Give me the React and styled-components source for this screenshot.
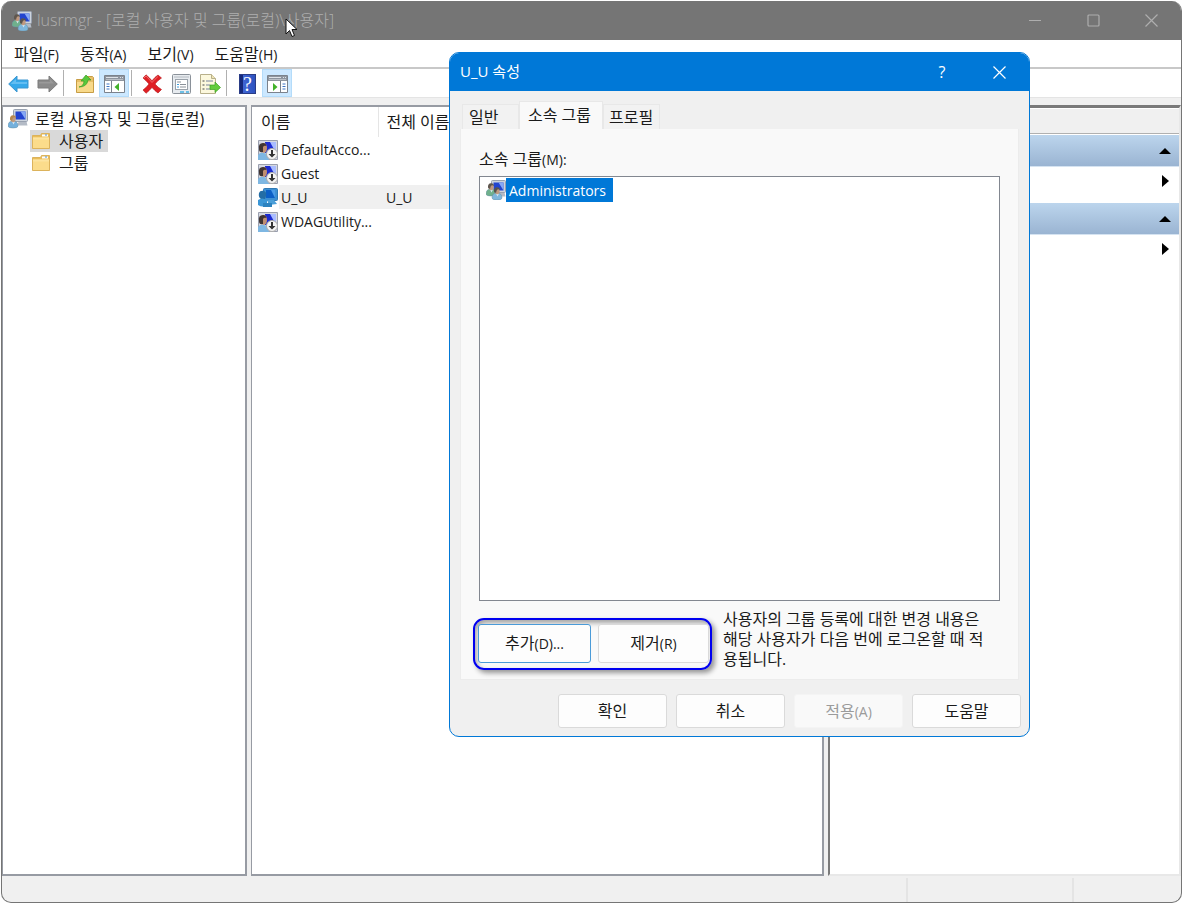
import React from "react";
import styled, { createGlobalStyle, css } from "styled-components";

const GlobalStyle = createGlobalStyle`
  * { box-sizing: border-box; }
  body { margin: 0; background: #fff; }
  button { font: inherit; color: inherit; }
  body, button {
    font-family: "Open Sans", "Noto Sans CJK KR", sans-serif;
    font-size: 16px;
    line-height: 20px;
    color: #1a1a1a;
  }
`;

const Latin = styled.span`
  font-size: 14px;
`;

const Desktop = styled.div`
  position: relative;
  min-height: 100vh;
  display: flex;
  flex-direction: column;
  padding: 1px 0 0 1px;
`;

const ConsoleWindow = styled.main`
  flex: 1;
  display: flex;
  flex-direction: column;
  border: 1px solid #757575;
  border-top: 0;
  border-radius: 10px;
  overflow: hidden;
  background: #f0f0f0;
`;

const TitleBar = styled.header`
  display: flex;
  align-items: center;
  height: 39px;
  padding-left: 10px;
  background: #757575;
  color: #aeaeae;
`;

const WindowTitle = styled.h1`
  flex: 1;
  margin: 0 0 2px 5px;
  font-size: 16px;
  font-weight: 300;
  line-height: 20px;
`;

const CaptionButton = styled.button`
  display: grid;
  place-items: center;
  width: ${(p) => p.$width || 58}px;
  height: 39px;
  padding: 0 2px 0 0;
  border: 0;
  background: transparent;
  color: inherit;
`;

const MenuBar = styled.nav`
  display: flex;
  gap: 21px;
  height: 29px;
  padding: 2px 12px 0;
  background: #fff;
  border-bottom: 2px solid #c8c8c8;
`;

const MenuItem = styled.button`
  padding: 0;
  border: 0;
  background: none;
`;

const ToolBar = styled.div`
  display: flex;
  align-items: center;
  height: 29px;
  padding-left: 2px;
  background: #fff;
  border-bottom: 1px solid #e4e4e4;
`;

const ToolButton = styled.button`
  display: grid;
  place-items: center;
  width: ${(p) => (p.$on ? 30 : 29)}px;
  height: 28px;
  padding: 2px 0 0;
  border: 1px solid ${(p) => (p.$on ? "#b4dcfa" : "transparent")};
  background: ${(p) => (p.$on ? "#cce8ff" : "transparent")};
`;

const ToolDivider = styled.span`
  width: 1px;
  height: 26px;
  margin: 0 6px 0 ${(p) => (p.$tight ? 1 : 2)}px;
  background: #b0b0b0;
`;

const Panes = styled.div`
  flex: 1;
  display: flex;
  gap: 4px;
  padding-top: 7px;
`;

const paneFrame = css`
  border: 2px solid #979ba3;
  border-width: 2px 2px 2px 1px;
  background: #fff;
`;

const TreePane = styled.section`
  ${paneFrame}
  flex: 0 0 245px;
  padding-left: 4px;
`;

const TreeList = styled.ul`
  margin: 0;
  padding: 0 0 0 ${(p) => (p.$nested ? 23 : 0)}px;
  list-style: none;
`;

const TreeItem = styled.li`
  display: flex;
  flex-direction: column;
  align-items: flex-start;
`;

const TreeRow = styled.button`
  display: flex;
  align-items: center;
  gap: 9px;
  height: 22px;
  padding: 0 5px 0 2px;
  border: 0;
  background: ${(p) => (p.$selected ? "#d9d9d9" : "transparent")};
  white-space: nowrap;
`;

const TreeRoot = styled(TreeRow)`
  gap: 7px;
  height: 23px;
  padding-left: 1px;
`;

const ListPane = styled.section`
  ${paneFrame}
  flex: 1;
  padding-left: 6px;
`;

const UserTable = styled.table`
  width: 100%;
  table-layout: fixed;
  border-collapse: collapse;
  font-size: 14px;
`;

const HeadCell = styled.th`
  width: ${(p) => p.$width || "auto"};
  height: 30px;
  padding: 0 0 0 ${(p) => p.$indent}px;
  border-right: 1px solid #e5e5e5;
  text-align: left;
  font-size: 16px;
  font-weight: 400;
`;

const Cell = styled.td`
  height: 24px;
  padding: 1px 0 0 ${(p) => p.$indent || 0}px;
  background: ${(p) =>
    p.$selected
      ? p.$first
        ? "linear-gradient(to right, #fff 21px, #f0f0f0 21px)"
        : "#f0f0f0"
      : "transparent"};
  white-space: nowrap;
`;

const UserName = styled.span`
  display: flex;
  align-items: center;
  gap: 3px;
`;

const ActionPane = styled.section`
  flex: 0 0 353px;
  display: flex;
  flex-direction: column;
  border: solid;
  border-width: 3px 2px 2px 2px;
  border-color: #7a7a7a #e8e8e8 #e8e8e8 #7a7a7a;
  background: #fff;
`;

const ActionHead = styled.div`
  height: 25px;
  margin-top: 1px;
  margin-bottom: 1px;
  border-bottom: 1px solid #b0b0b0;
  background: #f0f0f0;
`;

const ActionGroup = styled.button`
  display: flex;
  align-items: center;
  justify-content: flex-end;
  width: 100%;
  height: 32px;
  padding: 0 8px;
  border: 0;
  border-bottom: 1px solid #d5e3f1;
  background: linear-gradient(#bcd5ed, #9ab4d2);
`;

const ActionItem = styled.button`
  display: flex;
  align-items: center;
  justify-content: flex-end;
  width: 100%;
  height: 36px;
  padding: 0 10px 8px;
  border: 0;
  background: #fff;
`;

const StatusBar = styled.footer`
  display: flex;
  justify-content: flex-end;
  height: 26px;
  padding-top: 2px;
`;

const StatusCell = styled.div`
  width: ${(p) => p.$width}px;
  border-left: 2px solid #e4e4e4;
`;

const Dialog = styled.section`
  position: absolute;
  top: 52px;
  left: 449px;
  width: 581px;
  border: 1px solid #0078d7;
  border-radius: 10px;
  overflow: hidden;
  background: #f0f0f0;
`;

const DialogTitleBar = styled.header`
  display: flex;
  align-items: center;
  height: 38px;
  padding-left: 10px;
  background: #0078d7;
  color: #fff;
`;

const DialogTitle = styled.h2`
  flex: 1;
  margin: 0 0 2px;
  font-size: 15px;
  font-weight: 400;
  line-height: 20px;
`;

const TabStrip = styled.div`
  display: flex;
  align-items: flex-end;
  height: 38px;
  padding-left: 12px;
`;

const Tab = styled.button`
  width: ${(p) => p.$width}px;
  height: ${(p) => (p.$active ? 28 : 25)}px;
  padding: 0 0 ${(p) => (p.$active ? 2 : 0)}px ${(p) => p.$indent}px;
  border: 1px solid #e8e8e8;
  border-bottom: 0;
  background: ${(p) => (p.$active ? "#f9f9f9" : "#f2f2f2")};
  text-align: left;
  white-space: nowrap;
`;

const TabPanel = styled.div`
  margin: 0 10px;
  padding: 20px 18px 8px;
  border: 1px solid #ececec;
  border-top: 0;
  background: #f9f9f9;
`;

const GroupLabel = styled.div`
  height: 20px;
`;

const GroupList = styled.ul`
  height: 425px;
  margin: 7px 0 0;
  padding: 1px 6px;
  border: 1px solid #828790;
  background: #fff;
  list-style: none;
`;

const GroupOption = styled.li`
  display: flex;
  align-items: center;
`;

const GroupName = styled.span`
  height: 24px;
  padding: 1px 7px 0 3px;
  background: #0078d7;
  color: #fff;
  font-size: 14px;
  line-height: 23px;
`;

const MembershipRow = styled.div`
  display: flex;
  align-items: center;
  gap: 11px;
  margin: 8px 0 0 -6px;
`;

const MarkedButtons = styled.div`
  flex: 0 0 239px;
  display: flex;
  gap: 7px;
  height: 52px;
  margin-top: 8px;
  padding: 4px 1px 5px 3px;
  border: 2px solid #0000f0;
  border-radius: 11px;
  box-shadow: 3px 3px 5px rgba(0, 0, 0, 0.4), inset 2px 3px 5px rgba(0, 0, 0, 0.35);
`;

const MembershipNote = styled.p`
  margin: 0 0 2px;
`;

const PushButton = styled.button`
  flex: 0 0 ${(p) => p.$width || 109}px;
  height: ${(p) => p.$height || 34}px;
  padding: 0;
  border: 1px solid ${(p) => (p.$focus ? "#4a9bd8" : "#dadada")};
  border-radius: 3px;
  background: #fdfdfd;
  &:disabled {
    border-color: #f4f4f4;
    background: #f9f9f9;
    color: #9b9b9b;
  }
`;

const DialogFooter = styled.footer`
  display: flex;
  justify-content: flex-end;
  gap: 9px;
  padding: 14px 8px 8px;
`;

const Pointer = styled.svg`
  position: absolute;
  top: 18px;
  left: 285px;
`;

function MonitorShape({ x = 7, y = 1, w = 12, h = 10 }) {
  return (
    <g>
      <path d={`M${x + 5} ${y + h}h${w - 6}l1 4h-${w - 4}z`} fill="#b4bbc6" />
      <rect x={x} y={y} width={w} height={h} rx="1" fill="#cdd4dd" stroke="#98a1b0" />
      <rect x={x + 2} y={y + 2} width={w - 4} height={h - 4} fill="#2344cf" />
      <path d={`M${x + w / 2} ${y + 2}h${w / 2 - 2}v${h - 4}z`} fill="#86a8f5" />
    </g>
  );
}

function PersonShape({ x, y, hair, coat }) {
  return (
    <g transform={`translate(${x} ${y})`}>
      <path d="M0 11q0-5 5-5t5 5q0 2-5 2t-5-2z" fill={coat} stroke="#6a93a6" strokeWidth=".5" />
      <path d="M4 6.500h3l-1.500 3z" fill="#d8e8f3" />
      <ellipse cx="5.200" cy="4" rx="2.400" ry="3.200" fill="#c09a80" />
      <path d="M2 4.500Q1.600.4 5 .2q3.200 0 2.800 3Q6.600 1.800 5.400 2.600q-1.200 1.200-1.200 3Q2.400 6 2 4.500z" fill={hair} />
    </g>
  );
}

function UsersIcon() {
  return (
    <svg width="20" height="20" viewBox="0 0 20 20" aria-hidden="true">
      <MonitorShape x={5.5} y={0.5} w={14} h={12} />
      <PersonShape x={0} y={3} hair="#5f564e" coat="#6fb08c" />
      <PersonShape x={6} y={7} hair="#57534f" coat="#7fb7dc" />
    </svg>
  );
}

function ComputerUserIcon() {
  return (
    <svg width="20" height="20" viewBox="0 0 20 20" aria-hidden="true">
      <MonitorShape x={5.5} y={0.5} w={14} h={12} />
      <PersonShape x={0} y={6} hair="#b88a4e" coat="#74b0dc" />
    </svg>
  );
}

function DisabledUserIcon() {
  return (
    <svg width="20" height="20" viewBox="0 0 20 20" aria-hidden="true">
      <path d="M.5.5h19v19H.5z" fill="#d6d9e2" stroke="#9a9fae" />
      <rect x="7" y="2" width="11" height="11" fill="#1c2bd0" />
      <path d="M12 2h6v11z" fill="#a9bcff" />
      <path d="M0 20v-5q2-3 6-2 5 1 5 7z" fill="#7eb7e2" />
      <ellipse cx="6" cy="8" rx="3" ry="5" fill="#c08f70" />
      <path d="M1 9Q0 3 5 3q3 0 3.500 3Q6 5 5 7v5q-4 1-4-3z" fill="#403432" />
      <circle cx="14" cy="14" r="5.500" fill="#f4f4f4" stroke="#aaa" />
      <path d="M13 10h2v4h2.500L14 17.500 10.500 14H13z" fill="#333" />
    </svg>
  );
}

function SelectedUserIcon() {
  return (
    <svg width="20" height="20" viewBox="0 0 20 20" aria-hidden="true">
      <rect x="5.500" y=".5" width="14" height="12" rx="1" fill="#3c8fd2" stroke="#2f79b5" />
      <rect x="8" y="2" width="9" height="8" fill="#0b5fc6" />
      <path d="M13 2h4v8z" fill="#4a9be8" />
      <path d="M1 5q1-3 5-2 3 1 2 5l-1 3H3Q0 9 1 5z" fill="#236da5" />
      <path d="M0 12q4-3 9 0v5q-4 3-9 0z" fill="#3a96d6" />
      <path d="M9 12h7l3 4-8 1z" fill="#4b9fd9" />
      <path d="M5 15h9v4H5z" fill="#2c82bf" />
    </svg>
  );
}

function FolderIcon() {
  return (
    <svg width="18" height="17" viewBox="0 0 18 17" aria-hidden="true">
      <path d="M.5 2.500h8l1-2h8v15H.5z" fill="#e9bd5a" stroke="#dcb35c" />
      <path d="M10 1.500h6v2h-6z" fill="#fff" />
      <path d="M13 1.500h2v1h-2z" fill="#4b91dc" />
      <path d="M1 4.500h16V15H1z" fill="#fbdc8b" />
      <path d="M1 4.500h16v2H1z" fill="#fde4a0" />
    </svg>
  );
}

function ArrowIcon({ back }) {
  return (
    <svg width="21" height="18" viewBox="0 0 21 18" aria-hidden="true">
      <path
        d={back ? "M.7 9 9 1v4h11v8H9v4z" : "M20.300 9 12 1v4H1v8h11v4z"}
        fill={back ? "#35a8ea" : "#8b8b8b"}
        stroke={back ? "#3d97d0" : "#7d7d7d"}
      />
      <path
        d={back ? "M3 8.500 8 4v3h11v2H3z" : "M2 7h11V4l4 4.500H2z"}
        fill={back ? "#62bdf2" : "#9a9a9a"}
      />
    </svg>
  );
}

function UpFolderIcon() {
  return (
    <svg width="20" height="20" viewBox="0 0 20 20" aria-hidden="true">
      <path d="M1.500 5.500h8l2-3h6l1 1v15h-17z" fill="#e8c069" stroke="#c79d45" />
      <path d="M2 8h16v10H2z" fill="#f8d98a" />
      <path d="M4 13q5-1 5-6H6l5-6 5 5h-3q-1 7-9 7z" fill="#58c83b" stroke="#3a9d26" strokeWidth=".7" />
    </svg>
  );
}

function PaneIcon({ flip }) {
  return (
    <svg width="21" height="18" viewBox="0 0 21 18" aria-hidden="true">
      <path d="M.5.5h20v17H.5z" fill="#fff" stroke="#7b828c" />
      <path d="M1 1h19v5H1z" fill="#8e959f" />
      <path d="M2 2.500h12M16 2.500h1M18 2.500h1" stroke="#dfe3e8" />
      <path d="M2 4.500h17" stroke="#b9bec5" />
      <g transform={flip ? "translate(21 0) scale(-1 1)" : undefined}>
        <path d="M7.500 6v11" stroke="#7b828c" />
        <path d="M2.500 9h3M2.500 11.500h3M2.500 14h3" stroke="#3c74c4" />
        <path d="M15 8v8l-4.500-4z" fill="#42b22a" />
      </g>
    </svg>
  );
}

function DeleteIcon() {
  return (
    <svg width="21" height="20" viewBox="0 0 21 20" aria-hidden="true">
      <path
        d="M1 4 4 .8q3 2.500 6 6 3-4 6-5.800l3.500 3q-4 2.500-6.500 6 3 3.500 6.500 5.500L16 19q-3-2-6-5.500Q7 17 4 19.300L1 16q3.500-2.500 6-6Q4 6.500 1 4z"
        fill="#df1f24"
        stroke="#b51519"
        strokeWidth=".6"
      />
      <path d="M2 4 4 2q3 3 6 6.500Q13 5 16 2.500" fill="none" stroke="#f2686a" />
    </svg>
  );
}

function PropertiesIcon() {
  return (
    <svg width="19" height="20" viewBox="0 0 19 20" aria-hidden="true">
      <rect x=".5" y=".5" width="18" height="19" rx="1" fill="#e7ebef" stroke="#8a9199" />
      <path d="M2 3h15" stroke="#b4bac1" />
      <rect x="3.500" y="5.500" width="12" height="10" fill="#fff" stroke="#9aa2aa" />
      <path d="M5 8h4" stroke="#8a9199" />
      <path d="M5 10.500h2M5 13h2" stroke="#3c9bda" />
      <path d="M8 10.500h6M8 13h6" stroke="#8a9199" />
      <path d="M8 18h4M14 18h3" stroke="#45b1e4" strokeWidth="1.500" />
    </svg>
  );
}

function ExportIcon() {
  return (
    <svg width="21" height="20" viewBox="0 0 21 20" aria-hidden="true">
      <path d="M.5.5h11l4 4v15H.5z" fill="#fcf8dd" stroke="#b8b08b" />
      <path d="M11.500.5v4h4" fill="#eee4b4" stroke="#b8b08b" />
      <path d="M2.500 7h2M2.500 11h2M2.500 15h2" stroke="#444" />
      <path d="M6 7h7M6 11h4M6 15h4" stroke="#79849e" />
      <path d="M10 11h5V8l5.500 5.500L15 18.500v-3h-5z" fill="#63cc3c" stroke="#3da023" strokeWidth=".7" />
    </svg>
  );
}

const HelpTile = styled.span`
  display: grid;
  place-items: center;
  width: 17px;
  height: 20px;
  border: 1px solid #2a3c86;
  background: linear-gradient(to right, #16297b 3px, #3f66d4 3px, #2e52bf);
  color: #fff;
  font-family: "Liberation Serif", serif;
  font-size: 20px;
  line-height: 18px;
`;

function Triangle({ up }) {
  return up ? (
    <svg width="12" height="6" viewBox="0 0 12 6" aria-hidden="true">
      <path d="M0 6 6 0l6 6z" fill="#000" />
    </svg>
  ) : (
    <svg width="7" height="12" viewBox="0 0 7 12" aria-hidden="true">
      <path d="M0 0v12l7-6z" fill="#000" />
    </svg>
  );
}

function CaptionGlyph({ kind, color }) {
  const paths = {
    minimize: <path d="M0 6.500h12" />,
    maximize: <rect x="1" y="1" width="11" height="11" rx="1" />,
    close: <path d="M.5.5l12 12M12.500.5l-12 12" />,
  };
  return (
    <svg width="13" height="13" viewBox="0 0 13 13" fill="none" stroke={color} strokeWidth="1.200" aria-hidden="true">
      {paths[kind]}
    </svg>
  );
}

const menus = [
  ["파일", "(F)"],
  ["동작", "(A)"],
  ["보기", "(V)"],
  ["도움말", "(H)"],
];

const users = [
  { name: "DefaultAcco...", full: "" },
  { name: "Guest", full: "" },
  { name: "U_U", full: "U_U", selected: true },
  { name: "WDAGUtility...", full: "" },
];

export default function App() {
  return (
    <Desktop>
      <GlobalStyle />
      <ConsoleWindow>
        <TitleBar>
          <UsersIcon />
          <WindowTitle>lusrmgr - [로컬 사용자 및 그룹(로컬)\사용자]</WindowTitle>
          <CaptionButton aria-label="최소화"><CaptionGlyph kind="minimize" color="#aeaeae" /></CaptionButton>
          <CaptionButton aria-label="최대화"><CaptionGlyph kind="maximize" color="#aeaeae" /></CaptionButton>
          <CaptionButton aria-label="닫기"><CaptionGlyph kind="close" color="#aeaeae" /></CaptionButton>
        </TitleBar>
        <MenuBar>
          {menus.map(([label, key]) => (
            <MenuItem key={label}>{label}<Latin>{key}</Latin></MenuItem>
          ))}
        </MenuBar>
        <ToolBar>
          <ToolButton aria-label="뒤로"><ArrowIcon back /></ToolButton>
          <ToolButton aria-label="앞으로"><ArrowIcon /></ToolButton>
          <ToolDivider $tight />
          <ToolButton aria-label="위로"><UpFolderIcon /></ToolButton>
          <ToolButton $on aria-label="콘솔 트리"><PaneIcon /></ToolButton>
          <ToolDivider />
          <ToolButton aria-label="삭제"><DeleteIcon /></ToolButton>
          <ToolButton aria-label="속성"><PropertiesIcon /></ToolButton>
          <ToolButton aria-label="내보내기"><ExportIcon /></ToolButton>
          <ToolDivider $tight />
          <ToolButton aria-label="도움말"><HelpTile>?</HelpTile></ToolButton>
          <ToolButton $on aria-label="작업 창"><PaneIcon flip /></ToolButton>
        </ToolBar>
        <Panes>
          <TreePane>
            <TreeList>
              <li>
                <TreeRoot><ComputerUserIcon />로컬 사용자 및 그룹(로컬)</TreeRoot>
                <TreeList $nested>
                  <TreeItem><TreeRow $selected><FolderIcon />사용자</TreeRow></TreeItem>
                  <TreeItem><TreeRow><FolderIcon />그룹</TreeRow></TreeItem>
                </TreeList>
              </li>
            </TreeList>
          </TreePane>
          <ListPane>
            <UserTable>
              <thead>
                <tr>
                  <HeadCell $width="120px" $indent={3}>이름</HeadCell>
                  <HeadCell $indent={8}>전체 이름</HeadCell>
                </tr>
              </thead>
              <tbody>
                {users.map((u) => (
                  <tr key={u.name}>
                    <Cell $first $selected={u.selected}>
                      <UserName>
                        {u.selected ? <SelectedUserIcon /> : <DisabledUserIcon />}
                        {u.name}
                      </UserName>
                    </Cell>
                    <Cell $indent={8} $selected={u.selected}>{u.full}</Cell>
                  </tr>
                ))}
              </tbody>
            </UserTable>
          </ListPane>
          <ActionPane>
            <ActionHead />
            <ActionGroup aria-label="사용자 작업"><Triangle up /></ActionGroup>
            <ActionItem aria-label="기타 작업"><Triangle /></ActionItem>
            <ActionGroup aria-label="U_U 작업"><Triangle up /></ActionGroup>
            <ActionItem aria-label="기타 작업"><Triangle /></ActionItem>
          </ActionPane>
        </Panes>
        <StatusBar>
          <StatusCell $width={166} />
          <StatusCell $width={109} />
        </StatusBar>
      </ConsoleWindow>

      <Dialog role="dialog" aria-labelledby="dialog-title">
        <DialogTitleBar>
          <DialogTitle id="dialog-title">U_U 속성</DialogTitle>
          <CaptionButton $width={56} aria-label="도움말">?</CaptionButton>
          <CaptionButton aria-label="닫기"><CaptionGlyph kind="close" color="#fff" /></CaptionButton>
        </DialogTitleBar>
        <TabStrip role="tablist">
          <Tab role="tab" $width={57} $indent={6}>일반</Tab>
          <Tab role="tab" aria-selected="true" $active $width={84} $indent={8}>소속 그룹</Tab>
          <Tab role="tab" $width={57} $indent={5}>프로필</Tab>
        </TabStrip>
        <TabPanel role="tabpanel">
          <GroupLabel id="groups-label">소속 그룹<Latin>(M):</Latin></GroupLabel>
          <GroupList role="listbox" aria-labelledby="groups-label">
            <GroupOption role="option" aria-selected="true">
              <UsersIcon />
              <GroupName>Administrators</GroupName>
            </GroupOption>
          </GroupList>
          <MembershipRow>
            <MarkedButtons>
              <PushButton $width={113} $height={39} $focus>추가<Latin>(D)...</Latin></PushButton>
              <PushButton $width={111} $height={39}>제거<Latin>(R)</Latin></PushButton>
            </MarkedButtons>
            <MembershipNote>
              사용자의 그룹 등록에 대한 변경 내용은<br />
              해당 사용자가 다음 번에 로그온할 때 적<br />
              용됩니다.
            </MembershipNote>
          </MembershipRow>
        </TabPanel>
        <DialogFooter>
          <PushButton>확인</PushButton>
          <PushButton>취소</PushButton>
          <PushButton disabled>적용<Latin>(A)</Latin></PushButton>
          <PushButton>도움말</PushButton>
        </DialogFooter>
      </Dialog>

      <Pointer width="13" height="20" viewBox="0 0 13 20" aria-hidden="true">
        <path d="M1 1v15l3.500-3.500L7 18.500l2.500-1-2.500-6h5z" fill="#fff" stroke="#111" />
      </Pointer>
    </Desktop>
  );
}
